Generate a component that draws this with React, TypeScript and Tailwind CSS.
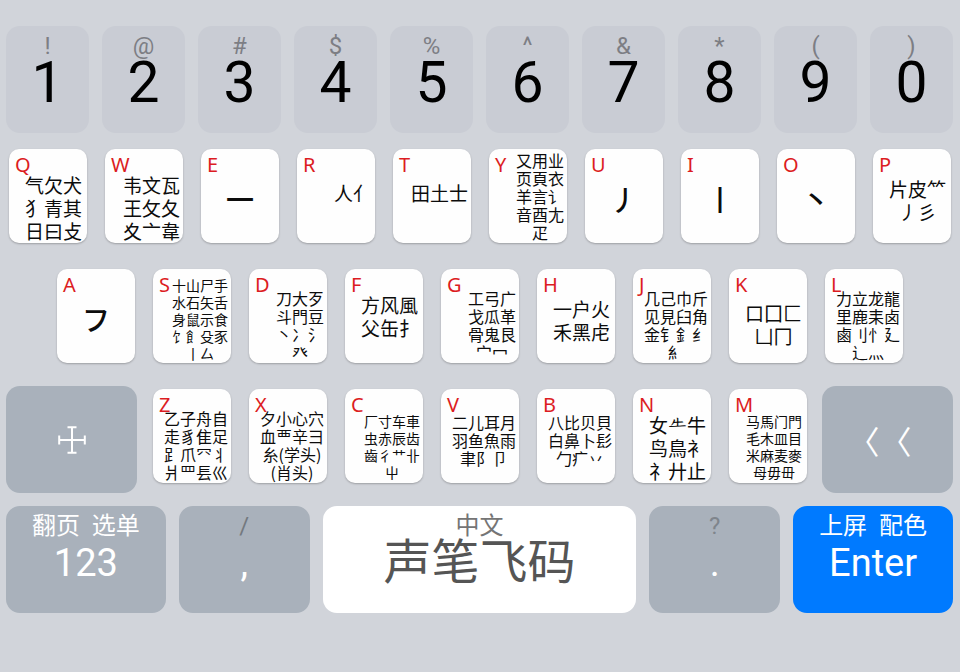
import type { ReactNode } from "react";

const cjk = "font-['Noto_Sans_CJK_SC','Noto_Sans_CJK_TC',sans-serif]";
const ui = "font-[Roboto,'Noto_Sans_CJK_SC',sans-serif]";

type Size = "sm" | "md" | "lg" | "xl";

interface RootKey {
  letter: string;
  lines: string[];
  size: Size;
  top?: string;
  inset?: string;
}

const sizes: Record<Size, string> = {
  sm: "text-[14px] leading-[17px]",
  md: "text-[16px] leading-[18px]",
  lg: "text-[19px] leading-[23px]",
  xl: "text-[28px] leading-[36px] font-medium",
};

const numberKeys = [
  ["!", "1"],
  ["@", "2"],
  ["#", "3"],
  ["$", "4"],
  ["%", "5"],
  ["^", "6"],
  ["&", "7"],
  ["*", "8"],
  ["(", "9"],
  [")", "0"],
];

const topRow: RootKey[] = [
  { letter: "Q", lines: ["气欠犬", "犭青其", "日曰攴"], size: "lg", top: "pt-6", inset: "pr-[5px]" },
  { letter: "W", lines: ["韦文瓦", "王攵夂", "夊亠韋"], size: "lg", top: "pt-6" },
  { letter: "E", lines: ["一"], size: "xl" },
  { letter: "R", lines: ["人亻"], size: "lg", top: "pt-8" },
  { letter: "T", lines: ["田土士"], size: "lg", top: "pt-8" },
  { letter: "Y", lines: ["又用业", "页頁衣", "羊言讠", "音酉尢", "疋"], size: "md", top: "pt-0.5" },
  { letter: "U", lines: ["丿"], size: "xl" },
  { letter: "I", lines: ["丨"], size: "xl" },
  { letter: "O", lines: ["丶"], size: "xl" },
  { letter: "P", lines: ["片皮⺮", "丿彡"], size: "lg", top: "pt-7", inset: "pr-[5px]" },
];

const homeRow: RootKey[] = [
  { letter: "A", lines: ["フ"], size: "xl" },
  { letter: "S", lines: ["十山尸手", "水石矢舌", "身鼠示食", "饣飠殳豕", "丨厶"], size: "sm", top: "pt-2" },
  { letter: "D", lines: ["刀大歹", "斗門豆", "丶冫氵", "癶"], size: "md", top: "pt-5" },
  { letter: "F", lines: ["方风風", "父缶扌"], size: "lg", top: "pt-6", inset: "pr-[5px]" },
  { letter: "G", lines: ["工弓广", "戈瓜革", "骨鬼艮", "宀冖"], size: "md", top: "pt-5" },
  { letter: "H", lines: ["一户火", "禾黑虍"], size: "lg", top: "pt-7", inset: "pr-[5px]" },
  { letter: "J", lines: ["几己巾斤", "见見臼角", "金钅釒纟", "糹"], size: "md", top: "pt-5" },
  { letter: "K", lines: ["口囗匚", "凵冂"], size: "lg", top: "pt-8", inset: "pr-[5px]" },
  { letter: "L", lines: ["力立龙龍", "里鹿耒卤", "鹵刂忄廴", "辶灬"], size: "md", top: "pt-5" },
];

const bottomRow: RootKey[] = [
  { letter: "Z", lines: ["乙子舟自", "走豸隹足", "𧾷爪⺳丬", "爿罒镸巛"], size: "md", top: "pt-5" },
  { letter: "X", lines: ["夕小心穴", "血覀辛彐", "糸(学头)", "(肖头)"], size: "md", top: "pt-5" },
  { letter: "C", lines: ["厂寸车車", "虫赤辰齿", "齒彳艹卝", "屮"], size: "sm", top: "pt-6" },
  { letter: "V", lines: ["二儿耳月", "羽鱼魚雨", "聿阝卩"], size: "md", top: "pt-6" },
  { letter: "B", lines: ["八比贝貝", "白鼻卜髟", "勹疒丷"], size: "md", top: "pt-6" },
  { letter: "N", lines: ["女𠂒牛", "鸟鳥衤", "礻廾止"], size: "lg", top: "pt-6", inset: "pr-[5px]" },
  { letter: "M", lines: ["马馬门門", "毛木皿目", "米麻麦麥", "母毋毌"], size: "sm", top: "pt-6", inset: "pr-[5px]" },
];

function LetterKey({ letter, lines, size, top, inset = "pr-[3px]" }: RootKey) {
  const placement =
    size === "xl" ? "items-center justify-center pt-1.5" : `items-start justify-end ${top} ${inset}`;
  return (
    <div className="min-w-0 flex-1 px-[9px] pt-[9px] pb-[17px]">
      <button
        type="button"
        className={`relative flex h-[94px] w-full overflow-hidden rounded-[10px] bg-[#fefefe] text-[#0c0c0c] shadow-[0_1px_2px_rgba(0,0,0,0.25)] ${placement}`}
      >
        <span className="absolute top-0.5 left-1.5 font-['Noto_Sans',sans-serif] text-[20px] leading-[28px] text-[#dc1c22]">
          {letter}
        </span>
        <span className={`block text-center whitespace-nowrap ${cjk} ${sizes[size]}`}>
          {lines.map((line) => (
            <span key={line} className="block">
              {line}
            </span>
          ))}
        </span>
      </button>
    </div>
  );
}

function WideKey({ grow, tone, children, label }: { grow: string; tone: string; children: ReactNode; label?: string }) {
  return (
    <div className={`min-w-0 ${grow} pt-1.5 pr-[7px] pb-[7px] pl-1.5`}>
      <button
        type="button"
        aria-label={label}
        className={`flex h-[107px] w-full flex-col items-center rounded-[14px] ${tone}`}
      >
        {children}
      </button>
    </div>
  );
}

function Legend({ hint, main, hintTone = "", mainSize }: { hint: string; main: string; hintTone?: string; mainSize: string }) {
  return (
    <>
      <span className={`mt-2 text-[24px] leading-[24px] whitespace-pre ${hintTone}`}>{hint}</span>
      <span className={`leading-[50px] ${mainSize}`}>{main}</span>
    </>
  );
}

export default function App() {
  return (
    <main className={`min-h-screen w-full bg-[#d1d4da] pt-5 ${ui}`}>
      <div className="flex">
        {numberKeys.map(([hint, digit]) => (
          <WideKey key={digit} grow="flex-1" tone="bg-[#c9ccd4] text-black">
            <Legend hint={hint} main={digit} hintTone="text-[#7d7e84]" mainSize="text-[57px]" />
          </WideKey>
        ))}
      </div>

      <div className="flex">
        {topRow.map((k) => (
          <LetterKey key={k.letter} {...k} />
        ))}
      </div>

      <div className="flex px-[5%]">
        {homeRow.map((k) => (
          <LetterKey key={k.letter} {...k} />
        ))}
      </div>

      <div className="flex">
        <WideKey grow="w-[15%]" tone="justify-center bg-[#a9b1bb] text-white" label="Shift">
          <svg width="28" height="28" viewBox="0 0 28 28" fill="none" stroke="currentColor" strokeWidth="2" aria-hidden="true">
            <path d="M14 1V27M1 14H27M9.500 1.200H18.500M9.500 26.800H18.500M1.200 9.500V18.500M26.800 9.500V18.500" />
          </svg>
        </WideKey>
        <div className="flex w-[70%]">
          {bottomRow.map((k) => (
            <LetterKey key={k.letter} {...k} />
          ))}
        </div>
        <WideKey grow="w-[15%]" tone="justify-center bg-[#a9b1bb] text-white" label="Backspace">
          <span className={`flex gap-4 text-[32px] leading-[48px] [font-feature-settings:'halt'] ${cjk}`}>
            <span>〈</span>
            <span>〈</span>
          </span>
        </WideKey>
      </div>

      <div className="flex">
        <WideKey grow="w-[18%]" tone="bg-[#a9b1bb] text-white">
          <Legend hint="翻页  选单" main="123" mainSize="text-[38px]" />
        </WideKey>
        <WideKey grow="w-[15%]" tone="bg-[#a9b1bb] text-white">
          <Legend hint="/" main="," hintTone="text-[#74797f]" mainSize="text-[38px]" />
        </WideKey>
        <WideKey grow="w-[34%]" tone="bg-white text-[#555555]">
          <Legend hint="中文" main="声笔飞码" hintTone="text-[#757575]" mainSize="text-[48px]" />
        </WideKey>
        <WideKey grow="w-[15%]" tone="bg-[#a9b1bb] text-white">
          <Legend hint="?" main="." hintTone="text-[#7f858c]" mainSize="text-[38px]" />
        </WideKey>
        <WideKey grow="w-[18%]" tone="bg-[#007aff] text-white">
          <Legend hint="上屏  配色" main="Enter" mainSize="text-[38px]" />
        </WideKey>
      </div>
    </main>
  );
}
